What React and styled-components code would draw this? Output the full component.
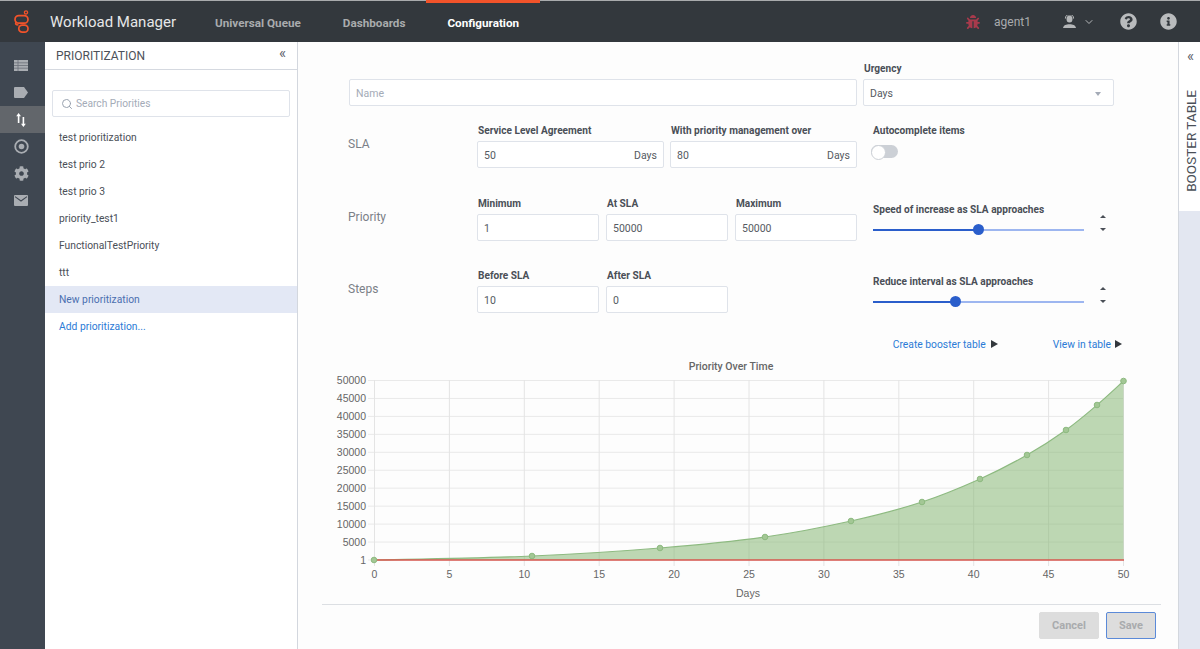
import React from 'react';
import styled, { createGlobalStyle } from 'styled-components';
import { FaCog, FaBug, FaQuestionCircle, FaInfoCircle } from 'react-icons/fa';
import { FiSearch, FiChevronDown } from 'react-icons/fi';

const GlobalStyle = createGlobalStyle`
  html, body {
    margin: 0;
    padding: 0;
    height: 100%;
    overflow: hidden;
    font-family: Roboto, "Liberation Sans", sans-serif;
    background: #fff;
  }
  * { box-sizing: border-box; }
`;

const priorities = [
  'test prioritization',
  'test prio 2',
  'test prio 3',
  'priority_test1',
  'FunctionalTestPriority',
  'ttt',
  'New prioritization',
];

const points = [
  [374, 560], [532, 556], [660, 548], [765, 537], [851, 521], [922, 502],
  [980, 479], [1027, 455], [1066, 430], [1097, 405], [1123.5, 381],
];

const yLabels = ['50000', '45000', '40000', '35000', '30000', '25000', '20000', '15000', '10000', '5000', '1'];
const xLabels = [0, 5, 10, 15, 20, 25, 30, 35, 40, 45, 50];

// chart svg starts at page x 322, y 374
const cx = (x) => x - 322;
const cy = (y) => y - 374;

const curvePath = () => {
  let d = `M${cx(points[0][0])} ${cy(points[0][1])}`;
  for (let i = 0; i < points.length - 1; i++) {
    const p0 = points[Math.max(i - 1, 0)];
    const p1 = points[i];
    const p2 = points[i + 1];
    const p3 = points[Math.min(i + 2, points.length - 1)];
    const c1x = p1[0] + (p2[0] - p0[0]) / 6;
    const c1y = p1[1] + (p2[1] - p0[1]) / 6;
    const c2x = p2[0] - (p3[0] - p1[0]) / 6;
    const c2y = p2[1] - (p3[1] - p1[1]) / 6;
    d += ` C${cx(c1x)} ${cy(c1y)} ${cx(c2x)} ${cy(c2y)} ${cx(p2[0])} ${cy(p2[1])}`;
  }
  return d;
};

const PriorityChart = () => {
  const line = curvePath();
  return (
    <svg width="818" height="230" viewBox="0 0 818 230" style={{ display: 'block' }}>
      {yLabels.map((label, i) => {
        const y = cy(380.5 + i * 17.95);
        return (
          <g key={label}>
            <line x1={cx(368)} x2={cx(1124)} y1={y} y2={y} stroke="#e9e9e9" />
            <text x={cx(366)} y={y + 3.5} textAnchor="end" fontSize="10.5" fill="#666" fontFamily="Liberation Sans, sans-serif">{label}</text>
          </g>
        );
      })}
      {xLabels.map((label, i) => {
        const x = cx(374.5 + i * 74.9);
        return (
          <g key={label}>
            <line x1={x} x2={x} y1={cy(380)} y2={cy(566)} stroke="#e4e4e4" />
            <text x={x} y={cy(578)} textAnchor="middle" fontSize="10.5" fill="#666" fontFamily="Liberation Sans, sans-serif">{label}</text>
          </g>
        );
      })}
      <path d={`${line} L${cx(1123.5)} ${cy(560)} L${cx(374)} ${cy(560)} Z`} fill="rgba(126,178,105,0.5)" />
      <path d={line} fill="none" stroke="#8dba80" strokeWidth="1.2" />
      <line x1={cx(374)} x2={cx(1124)} y1={cy(560)} y2={cy(560)} stroke="#d9574f" strokeWidth="1.5" />
      {points.map(([x, y]) => (
        <circle key={x} cx={cx(x)} cy={cy(y)} r="2.8" fill="#a3c795" stroke="#8dba80" />
      ))}
      <text x={cx(748)} y={cy(597)} textAnchor="middle" fontSize="10.5" fill="#666" fontFamily="Liberation Sans, sans-serif">Days</text>
    </svg>
  );
};

const Logo = () => (
  <svg width="15" height="23" viewBox="0 0 15 23" fill="none" stroke="#f2532a" strokeWidth="1.7">
    <circle cx="12" cy="2.4" r="1.6" strokeWidth="1.3" />
    <rect x="1" y="5.6" width="13" height="7.6" rx="3.8" />
    <path d="M2.2 12 C1 14 1.8 15 4.5 15" />
    <rect x="4.8" y="15.2" width="9.2" height="6.9" rx="3.4" />
  </svg>
);

const ListIcon = () => (
  <svg width="14" height="11" viewBox="0 0 14 11">
    <rect width="14" height="11" fill="#a9adb2" />
    <path d="M4 0 V11 M0 2.8 H14 M0 5.5 H14 M0 8.2 H14" stroke="#6b7078" strokeWidth=".8" />
  </svg>
);

const TagIcon = () => (
  <svg width="14" height="11" viewBox="0 0 14 11" fill="#a9adb2">
    <path d="M1 0 H10 L14 5.5 L10 11 H1 Q0 11 0 10 V1 Q0 0 1 0 Z" />
  </svg>
);

const SortIcon = () => (
  <svg width="10" height="14" viewBox="0 0 10 14" fill="#fff">
    <path d="M2.6 0 L5 3.2 H3.4 V10 H1.8 V3.2 H.2 Z" />
    <path d="M7.4 14 L5 10.8 H6.6 V4 H8.2 V10.8 H9.8 Z" />
  </svg>
);

const TargetIcon = () => (
  <svg width="15" height="15" viewBox="0 0 15 15" fill="none">
    <circle cx="7.5" cy="7.5" r="6.3" stroke="#a9adb2" strokeWidth="1.8" />
    <circle cx="7.5" cy="7.5" r="2.8" fill="#a9adb2" />
  </svg>
);

const MailIcon = () => (
  <svg width="14" height="11" viewBox="0 0 14 11">
    <rect width="14" height="11" rx="1" fill="#a9adb2" />
    <path d="M1 1.6 L7 6 L13 1.6" fill="none" stroke="#3f4751" strokeWidth="1.1" />
  </svg>
);

const AgentIcon = () => (
  <svg width="13" height="13" viewBox="0 0 13 13" fill="#b5b7b9">
    <ellipse cx="6.5" cy="4" rx="3" ry="3.6" />
    <path d="M2.4 3.6 a4.1 4 0 0 1 8.2 0" fill="none" stroke="#b5b7b9" />
    <path d="M0 13 C.6 10 3 9.2 6.5 9.2 S12.4 10 13 13 Z" />
  </svg>
);

const App = () => (
  <Page>
    <GlobalStyle />
    <TopBar>
      <LogoCell><Logo /></LogoCell>
      <AppTitle>Workload Manager</AppTitle>
      <Nav>
        <NavTab>Universal Queue</NavTab>
        <NavTab>Dashboards</NavTab>
        <NavTab $active>Configuration</NavTab>
      </Nav>
      <UserArea>
        <FaBug size={14} color="#a83a4c" />
        <UserName>agent1</UserName>
        <AgentGroup>
          <AgentIcon />
          <FiChevronDown size={12} color="#b5b7b9" />
        </AgentGroup>
        <HelpGroup>
          <FaQuestionCircle size={17} color="#b9bbbd" />
          <FaInfoCircle size={17} color="#b9bbbd" />
        </HelpGroup>
      </UserArea>
    </TopBar>
    <Body>
      <Rail>
        <RailItem><ListIcon /></RailItem>
        <RailItem><TagIcon /></RailItem>
        <RailItem $active><SortIcon /></RailItem>
        <RailItem><TargetIcon /></RailItem>
        <RailItem><FaCog size={15} color="#a9adb2" /></RailItem>
        <RailItem><MailIcon /></RailItem>
      </Rail>
      <Panel>
        <PanelHeader>
          <PanelTitle>PRIORITIZATION</PanelTitle>
          <Collapse>«</Collapse>
        </PanelHeader>
        <SearchBox>
          <FiSearch size={12} color="#9aa3b0" />
          <span>Search Priorities</span>
        </SearchBox>
        <PriorityList>
          {priorities.map((name) => (
            <PriorityItem key={name} $selected={name === 'New prioritization'}>{name}</PriorityItem>
          ))}
          <PriorityItem $link>Add prioritization...</PriorityItem>
        </PriorityList>
      </Panel>
      <Main>
        <Form>
          <NameRow>
            <Field>
              <FieldLabel />
              <InputBox $muted>Name</InputBox>
            </Field>
            <Field>
              <FieldLabel>Urgency</FieldLabel>
              <InputBox>
                Days
                <SelectCaret />
              </InputBox>
            </Field>
          </NameRow>
          <FormRow $top={15}>
            <RowTitle>SLA</RowTitle>
            <Fields $gap={6}>
              <Field>
                <FieldLabel>Service Level Agreement</FieldLabel>
                <InputBox>50<Unit>Days</Unit></InputBox>
              </Field>
              <Field>
                <FieldLabel>With priority management over</FieldLabel>
                <InputBox>80<Unit>Days</Unit></InputBox>
              </Field>
            </Fields>
            <SideCol>
              <FieldLabel>Autocomplete items</FieldLabel>
              <Toggle />
            </SideCol>
          </FormRow>
          <FormRow $top={26}>
            <RowTitle>Priority</RowTitle>
            <Fields $gap={7}>
              <Field>
                <FieldLabel>Minimum</FieldLabel>
                <InputBox>1</InputBox>
              </Field>
              <Field>
                <FieldLabel>At SLA</FieldLabel>
                <InputBox>50000</InputBox>
              </Field>
              <Field>
                <FieldLabel>Maximum</FieldLabel>
                <InputBox>50000</InputBox>
              </Field>
            </Fields>
            <SliderRow>
              <SliderCol>
                <FieldLabel>Speed of increase as SLA approaches</FieldLabel>
                <Slider $value={49.8} />
              </SliderCol>
              <Stepper><CaretUp /><CaretDown /></Stepper>
            </SliderRow>
          </FormRow>
          <FormRow $top={25}>
            <RowTitle>Steps</RowTitle>
            <Fields $gap={7}>
              <Field>
                <FieldLabel>Before SLA</FieldLabel>
                <InputBox>10</InputBox>
              </Field>
              <Field>
                <FieldLabel>After SLA</FieldLabel>
                <InputBox>0</InputBox>
              </Field>
              <Field />
            </Fields>
            <SliderRow>
              <SliderCol>
                <FieldLabel>Reduce interval as SLA approaches</FieldLabel>
                <Slider $value={38.9} />
              </SliderCol>
              <Stepper><CaretUp /><CaretDown /></Stepper>
            </SliderRow>
          </FormRow>
          <LinksRow>
            <TableLink>Create booster table<LinkArrow $space={5} /></TableLink>
            <TableLink>View in table<LinkArrow $space={4} /></TableLink>
          </LinksRow>
        </Form>
        <ChartTitle>Priority Over Time</ChartTitle>
        <PriorityChart />
        <Footer>
          <FooterButton>Cancel</FooterButton>
          <FooterButton $focused>Save</FooterButton>
        </Footer>
      </Main>
      <Dock>
        <DockTab>
          <DockCollapse>«</DockCollapse>
          <DockLabel>BOOSTER TABLE</DockLabel>
        </DockTab>
      </Dock>
    </Body>
  </Page>
);

export default App;

const Page = styled.div`
  width: 1200px;
  height: 649px;
  display: flex;
  flex-direction: column;
  overflow: hidden;
`;

const TopBar = styled.header`
  height: 42px;
  flex: none;
  display: flex;
  align-items: center;
  background: #33383d;
  border-top: 1px solid #a9abad;
`;

const LogoCell = styled.div`
  width: 45px;
  display: flex;
  justify-content: center;
  padding-right: 3px;
`;

const AppTitle = styled.div`
  width: 128px;
  margin-left: 5px;
  white-space: nowrap;
  font-size: 15px;
  color: #e6e7e8;
`;

const Nav = styled.nav`
  display: flex;
  height: 100%;
  margin-left: 16px;
`;

const NavTab = styled.div`
  display: flex;
  align-items: center;
  padding: 0 21px;
  margin-top: -1px;
  font-size: 11.7px;
  font-weight: 700;
  color: ${(p) => (p.$active ? '#fff' : '#a9abad')};
  border-top: 3px solid ${(p) => (p.$active ? '#f2532a' : 'transparent')};
`;

const UserArea = styled.div`
  margin-left: auto;
  padding-right: 23px;
  display: flex;
  align-items: center;
`;

const UserName = styled.span`
  margin-left: 14px;
  font-size: 12px;
  color: #a9abad;
`;

const AgentGroup = styled.div`
  margin-left: 32px;
  display: flex;
  align-items: center;
  gap: 7px;
`;

const HelpGroup = styled.div`
  margin-left: 25px;
  display: flex;
  gap: 23px;
`;

const Body = styled.div`
  flex: 1;
  min-height: 0;
  display: flex;
`;

const Rail = styled.aside`
  width: 45px;
  flex: none;
  padding-top: 10px;
  background: #3f4751;
`;

const RailItem = styled.div`
  height: 27px;
  display: flex;
  align-items: center;
  justify-content: center;
  padding-right: 3px;
  background: ${(p) => (p.$active ? '#62666b' : 'transparent')};
`;

const Panel = styled.section`
  width: 253px;
  flex: none;
  background: #fff;
  border-right: 1px solid #d3d7de;
`;

const PanelHeader = styled.div`
  height: 28px;
  display: flex;
  align-items: center;
  justify-content: space-between;
  padding: 0 11px;
  border-bottom: 1px solid #d5d9e0;
`;

const PanelTitle = styled.div`
  font-size: 12px;
  color: #4c5159;
`;

const Collapse = styled.span`
  font-size: 15px;
  line-height: 15px;
  color: #5d626a;
  margin-top: -4px;
`;

const SearchBox = styled.div`
  height: 27px;
  margin: 20px 7px 7px;
  padding: 0 8px;
  display: flex;
  align-items: center;
  gap: 3px;
  font-size: 10.2px;
  color: #a4abb7;
  border: 1px solid #dfe3ea;
  border-radius: 2px;
`;

const PriorityList = styled.div`
  display: flex;
  flex-direction: column;
`;

const PriorityItem = styled.div`
  height: 27px;
  line-height: 27px;
  padding-left: 14px;
  font-size: 10.3px;
  color: ${(p) => {
    if (p.$link) return '#2b7bd6';
    return p.$selected ? '#4a6fb0' : '#4a4f57';
  }};
  background: ${(p) => (p.$selected ? '#e3e8f5' : 'transparent')};
`;

const Main = styled.main`
  flex: 1;
  min-width: 0;
  padding: 0 17px 0 24px;
  background: #fdfdfd;
  border-right: 1px solid #d3d7de;
`;

const Form = styled.div`
  margin-left: 27px;
  width: 773px;
`;

const NameRow = styled.div`
  display: grid;
  grid-template-columns: 508px 251px;
  column-gap: 6px;
  padding-top: 17px;
`;

const FormRow = styled.div`
  display: grid;
  grid-template-columns: 128px 380px 265px;
  margin-top: ${(p) => p.$top}px;
`;

const RowTitle = styled.div`
  align-self: center;
  font-size: 12px;
  color: #7b8087;
  margin: -2px 0 0 -1px;
`;

const Fields = styled.div`
  display: flex;
  gap: ${(p) => p.$gap}px;
`;

const Field = styled.div`
  flex: 1;
  min-width: 0;
`;

const FieldLabel = styled.div`
  height: 20px;
  line-height: 19px;
  padding-left: 1px;
  font-size: 10.1px;
  font-weight: 700;
  white-space: nowrap;
  color: #4a4f57;
`;

const InputBox = styled.div`
  height: 27px;
  display: flex;
  align-items: center;
  justify-content: space-between;
  padding: 2px 6px 0;
  font-size: 10.5px;
  color: ${(p) => (p.$muted ? '#a4abb7' : '#555a62')};
  background: #fff;
  border: 1px solid #dfe3ea;
  border-radius: 2px;
`;

const Unit = styled.span`
  color: #555a62;
`;

const SelectCaret = styled.span`
  margin-right: 6px;
  width: 0;
  height: 0;
  border-left: 3.5px solid transparent;
  border-right: 3.5px solid transparent;
  border-top: 4px solid #a4abb7;
`;

const SideCol = styled.div`
  margin-left: 15px;
`;

const Toggle = styled.div`
  position: relative;
  width: 27px;
  height: 13px;
  margin: 4px 0 0 -1px;
  border-radius: 7px;
  background: #ccd0d6;

  &::after {
    content: '';
    position: absolute;
    left: 0;
    top: 0;
    width: 13px;
    height: 13px;
    border-radius: 50%;
    background: #fff;
    border: 1px solid #ccd0d6;
  }
`;

const SliderRow = styled.div`
  display: flex;
  margin-left: 15px;
  padding-top: 6px;
`;

const SliderCol = styled.div`
  width: 212px;
  padding-right: 0;
  flex: none;
`;

const Slider = styled.div`
  position: relative;
  height: 2px;
  margin: 9px 0 0 1px;
  background: linear-gradient(
    to right,
    #2a5ecb ${(p) => p.$value}%,
    #9db6f0 ${(p) => p.$value}%
  );

  &::after {
    content: '';
    position: absolute;
    left: ${(p) => p.$value}%;
    top: -5px;
    width: 11px;
    height: 11px;
    margin-left: -5px;
    border-radius: 50%;
    background: #2a5ecb;
  }
`;

const Stepper = styled.div`
  margin-left: 16px;
  padding-top: 15px;
  display: flex;
  flex-direction: column;
  align-items: center;
  gap: 10px;
`;

const CaretUp = styled.span`
  width: 6px;
  height: 3px;
  border-left: 3px solid transparent;
  border-right: 3px solid transparent;
  border-bottom: 3px solid #4a4f57;
`;

const CaretDown = styled.span`
  width: 6px;
  height: 3px;
  border-left: 3px solid transparent;
  border-right: 3px solid transparent;
  border-top: 3px solid #4a4f57;
`;

const LinksRow = styled.div`
  height: 20px;
  margin-top: 21px;
  display: flex;
  justify-content: flex-end;
  align-items: center;
  gap: 55px;
`;

const TableLink = styled.a`
  display: flex;
  align-items: center;
  font-size: 10.3px;
  color: #2b7bd6;
`;

const LinkArrow = styled.span`
  margin-left: ${(p) => p.$space}px;
  width: 0;
  height: 0;
  border-top: 4px solid transparent;
  border-bottom: 4px solid transparent;
  border-left: 7px solid #33383d;
`;

const ChartTitle = styled.div`
  width: 818px;
  height: 15px;
  margin-top: 5px;
  line-height: 15px;
  text-align: center;
  font-size: 10.5px;
  font-weight: 500;
  color: #666;
`;

const Footer = styled.footer`
  display: flex;
  justify-content: flex-end;
  gap: 7px;
  padding: 7px 5px 0 0;
  border-top: 1px solid #dcdfe3;
`;

const FooterButton = styled.button`
  height: 27px;
  width: ${(p) => (p.$focused ? '50px' : '60px')};
  padding: 0;
  font-family: inherit;
  font-size: 11px;
  font-weight: 700;
  color: #a9abad;
  background: #dddddd;
  border: ${(p) => (p.$focused ? '1px solid #5b8ad8' : '1px solid #dddddd')};
  border-radius: 2px;
`;

const Dock = styled.aside`
  width: 21px;
  flex: none;
  background: #e3e7f1;
`;

const DockTab = styled.div`
  height: 169px;
  padding-left: 2px;
  background: #fff;
  display: flex;
  flex-direction: column;
  align-items: center;
`;

const DockCollapse = styled.span`
  margin-top: 7px;
  font-size: 15px;
  line-height: 15px;
  color: #5d626a;
`;

const DockLabel = styled.span`
  margin-top: 26px;
  writing-mode: vertical-rl;
  transform: rotate(180deg);
  font-size: 13.5px;
  line-height: 14px;
  white-space: nowrap;
  color: #4a4f57;
`;
